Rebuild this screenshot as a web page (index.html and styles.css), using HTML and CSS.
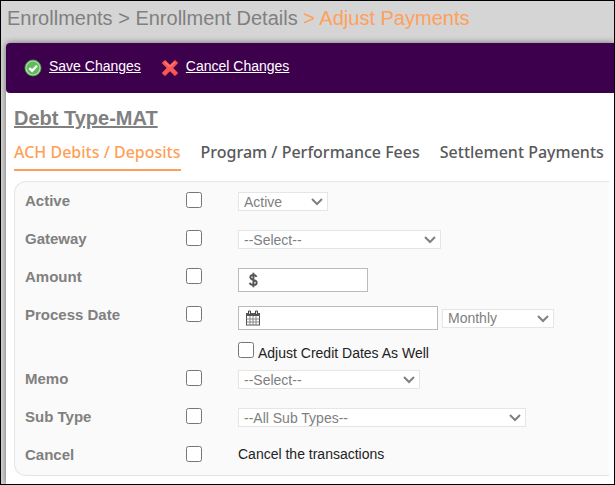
FILE: index.html
```html
<!DOCTYPE html>
<html lang="en">
<head>
    <meta charset="UTF-8">
    <meta name="viewport" content="width=device-width, initial-scale=1.0">
    <title>Adjust Payments</title>
    <link rel="stylesheet" href="styles.css">
</head>
<body>
    <nav class="breadcrumb">Enrollments &gt; Enrollment Details <span class="current">&gt; Adjust Payments</span></nav>

    <main class="panel">
        <div class="toolbar">
            <a href="#save" class="action">
                <svg width="18" height="18" viewBox="0 0 18 18" aria-hidden="true">
                    <circle cx="9" cy="9" r="8.5" fill="#3f9142"/>
                    <circle cx="9" cy="9" r="7" fill="#62b95e" stroke="#b5e0ac" stroke-width="1.2"/>
                    <path d="M5.3 9.2l2.8 2.7 4.8-5.2" fill="none" stroke="#fff" stroke-width="2.4"/>
                </svg>
                <span>Save Changes</span>
            </a>
            <a href="#cancel" class="action">
                <svg width="18" height="18" viewBox="0 0 18 18" aria-hidden="true">
                    <path d="M1 4L4 1.2 9 6l5-4.8L16.8 4 12 9l4.8 5-2.8 2.8L9 12l-5 4.8L1 14l5-5z" fill="#f9585a" stroke="#d93a40" stroke-width="1" stroke-linejoin="round"/>
                    <path d="M4 3l5 4.6L14 3" fill="none" stroke="#ff8f8c" stroke-width="1"/>
                </svg>
                <span>Cancel Changes</span>
            </a>
        </div>

        <div class="content">
            <h1>Debt Type-MAT</h1>

            <div class="tabs">
                <a href="#ach" class="tab active">ACH Debits / Deposits</a>
                <a href="#fees" class="tab">Program / Performance Fees</a>
                <a href="#settlement" class="tab">Settlement Payments</a>
            </div>

            <form class="fields">
                <div class="row">
                    <label class="name" for="chkActive">Active</label>
                    <input type="checkbox" id="chkActive">
                    <div class="control">
                        <div class="select w-small">
                            <select aria-label="Active value"><option>Active</option><option>Inactive</option></select>
                            <svg width="12" height="8" viewBox="0 0 12 8" aria-hidden="true"><path d="M1 1l5 5 5-5"/></svg>
                        </div>
                    </div>
                </div>
                <div class="row">
                    <label class="name" for="chkGateway">Gateway</label>
                    <input type="checkbox" id="chkGateway">
                    <div class="control">
                        <div class="select w-large">
                            <select aria-label="Gateway value"><option>--Select--</option></select>
                            <svg width="12" height="8" viewBox="0 0 12 8" aria-hidden="true"><path d="M1 1l5 5 5-5"/></svg>
                        </div>
                    </div>
                </div>
                <div class="row">
                    <label class="name" for="chkAmount">Amount</label>
                    <input type="checkbox" id="chkAmount">
                    <div class="control">
                        <div class="textbox w-amount">
                            <svg width="14" height="16" viewBox="0 0 14 16" aria-hidden="true">
                                <path d="M10.400 5C10 3.600 8.900 3 7.300 3 5.500 3 4.300 3.800 4.300 5.200c0 3.400 6.400 1.900 6.400 5.500C10.700 12.200 9.300 13 7.400 13 5.400 13 4.200 12.300 3.700 10.800M7.400 .8v14.400" fill="none" stroke="#555" stroke-width="1.900"/>
                            </svg>
                            <input type="text" aria-label="Amount value">
                        </div>
                    </div>
                </div>
                <div class="row">
                    <label class="name" for="chkDate">Process Date</label>
                    <input type="checkbox" id="chkDate">
                    <div class="control">
                        <div class="textbox w-date">
                            <svg width="14" height="16" viewBox="0 0 14 16" aria-hidden="true">
                                <path d="M0 3h14v12.500H0z" fill="#555"/>
                                <path d="M1 6h12v8.500H1z" fill="#fff"/>
                                <path d="M4 6v9M7 6v9M10 6v9M1 9h12M1 12h12" stroke="#888" stroke-width="1"/>
                                <path d="M2.500 1h2v3.500h-2zM9.500 1h2v3.500h-2z" fill="#ddd" stroke="#444" stroke-width="1"/>
                            </svg>
                            <input type="text" aria-label="Process date value">
                        </div>
                        <div class="select w-month">
                            <select aria-label="Frequency"><option>Monthly</option><option>Weekly</option></select>
                            <svg width="12" height="8" viewBox="0 0 12 8" aria-hidden="true"><path d="M1 1l5 5 5-5"/></svg>
                        </div>
                        <div class="credit">
                            <input type="checkbox" id="chkCredit">
                            <label for="chkCredit">Adjust Credit Dates As Well</label>
                        </div>
                    </div>
                </div>
                <div class="row">
                    <label class="name" for="chkMemo">Memo</label>
                    <input type="checkbox" id="chkMemo">
                    <div class="control">
                        <div class="select w-medium">
                            <select aria-label="Memo value"><option>--Select--</option></select>
                            <svg width="12" height="8" viewBox="0 0 12 8" aria-hidden="true"><path d="M1 1l5 5 5-5"/></svg>
                        </div>
                    </div>
                </div>
                <div class="row">
                    <label class="name" for="chkSubType">Sub Type</label>
                    <input type="checkbox" id="chkSubType">
                    <div class="control">
                        <div class="select w-wide">
                            <select aria-label="Sub type value"><option>--All Sub Types--</option></select>
                            <svg width="12" height="8" viewBox="0 0 12 8" aria-hidden="true"><path d="M1 1l5 5 5-5"/></svg>
                        </div>
                    </div>
                </div>
                <div class="row">
                    <label class="name" for="chkCancel">Cancel</label>
                    <input type="checkbox" id="chkCancel">
                    <div class="control">Cancel the transactions</div>
                </div>
            </form>
        </div>
    </main>
</body>
</html>
```
FILE: styles.css
```css
* {
    box-sizing: border-box;
}

body {
    display: flex;
    flex-direction: column;
    min-height: 100vh;
    margin: 0;
    border: 1px solid #000;
    background-color: #d5d5d5;
    color: #222;
    font-family: Arial, "Liberation Sans", sans-serif;
    font-size: 14px;
}

.breadcrumb {
    padding: 5px 6px 13px;
    color: #808080;
    font-size: 20px;
    line-height: 24px;
}

.current {
    color: #ffa05c;
}

.panel {
    flex: 1;
    margin-left: 5px;
    border-radius: 4px 0 0 0;
    background-color: #fff;
    box-shadow: 0 0 6px rgba(0, 0, 0, 0.5);
    clip-path: inset(-8px 0 0 -5px);
}

.toolbar {
    display: flex;
    gap: 20px;
    padding: 12px 18px 16px;
    border-radius: 4px 0 0 4px;
    background-color: #3d004d;
}

.action {
    display: flex;
    align-items: center;
    gap: 7px;
    height: 22px;
    color: #fff;
    text-decoration: none;
}

.action svg {
    margin-top: 4px;
}

.action span {
    text-decoration: underline;
}

.content {
    padding: 13px 5px 8px 8px;
}

h1 {
    margin: 0;
    color: #808080;
    font-size: 20px;
    line-height: 24px;
    text-decoration: underline;
}

.tabs {
    display: flex;
    gap: 20px;
    margin: 10px 0;
    white-space: nowrap;
}

.tab {
    padding-bottom: 5px;
    border-bottom: 2px solid transparent;
    color: #58595b;
    font-family: "Noto Sans", "Open Sans", sans-serif;
    font-size: 16px;
    font-weight: 500;
    line-height: 24px;
    text-decoration: none;
}

.tab.active {
    border-bottom-color: #ff9f57;
    color: #ff9f57;
}

.fields {
    display: flex;
    flex-direction: column;
    gap: 13px;
    padding: 10px 0 4px 10px;
    border: 1px solid #e5e5e5;
    border-right: none;
    border-radius: 12px 0 0 12px;
    background-color: #fafafa;
}

.row {
    display: grid;
    grid-template-columns: 161px 52px 1fr;
    align-items: start;
    min-height: 25px;
}

.name {
    color: #808080;
    font-size: 15px;
    font-weight: bold;
    line-height: 18px;
}

input[type="checkbox"] {
    width: 16px;
    height: 16px;
    margin: 0;
}

.control {
    display: flex;
    flex-wrap: wrap;
    align-items: center;
    gap: 12px 4px;
    line-height: 16px;
}

.select {
    position: relative;
}

.select select {
    display: block;
    width: 100%;
    height: 19px;
    padding: 0 5px;
    border: 1px solid #e5e5e5;
    border-radius: 0;
    background-color: #fff;
    color: #808080;
    font-family: inherit;
    font-size: 14px;
    line-height: 16px;
    appearance: none;
}

.select svg {
    position: absolute;
    top: 6px;
    right: 5px;
    fill: none;
    stroke: #808080;
    stroke-width: 2;
    pointer-events: none;
}

.textbox {
    display: flex;
    align-items: center;
    gap: 4px;
    height: 24px;
    padding: 0 7px;
    border: 1px solid #bbb;
    background-color: #fff;
}

.textbox input {
    flex: 1;
    min-width: 0;
    border: none;
    outline: none;
    background: none;
    font-size: 14px;
}

.credit {
    display: flex;
    flex-basis: 100%;
    gap: 4px;
    height: 15px;
}

.credit label {
    line-height: 22px;
}

.w-small {
    width: 90px;
}

.w-month {
    width: 112px;
}

.w-amount {
    width: 130px;
}

.w-medium {
    width: 182px;
}

.w-date {
    width: 200px;
}

.w-large {
    width: 203px;
}

.w-wide {
    width: 288px;
}
```
